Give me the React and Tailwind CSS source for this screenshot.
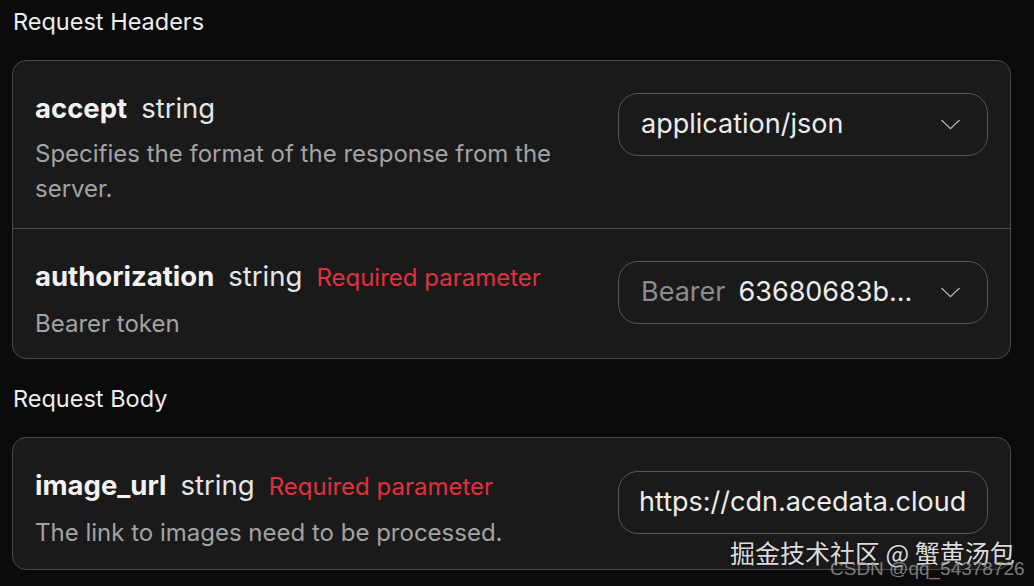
function Chevron() {
  return (
    <svg viewBox="0 0 22 12" className="h-[11px] w-[21px] shrink-0" fill="none" stroke="#bdbdbd" strokeWidth="1.5">
      <path d="M1.5 1.5l9.5 9 9.5-9" strokeLinecap="round" strokeLinejoin="round" />
    </svg>
  );
}

function Select({ children }) {
  return (
    <div className="mt-[3px] flex h-[63px] w-[370px] shrink-0 items-center justify-between rounded-[20px] border border-[#575757] pl-[22px] pr-[26px]">
      <div className="flex min-w-0 items-center gap-[13px] text-[27px] text-[#ececec]">{children}</div>
      <Chevron />
    </div>
  );
}

function Param({ name, required, desc, children, last, pb = 'pb-[17px]' }) {
  return (
    <div className={`flex items-start justify-between gap-6 px-[22px] pt-[29px] ${pb} ${last ? '' : 'border-b border-[#4a4a4a]'}`}>
      <div className="min-w-0">
        <div className="flex items-baseline gap-[14px] leading-[36px]">
          <span className="text-[27.5px] font-bold text-[#f2f2f2]">{name}</span>
          <span className="text-[27.5px] text-[#e6e6e6]">string</span>
          {required && <span className="text-[24px] text-[#e0313d]">Required parameter</span>}
        </div>
        <p className="mt-[10px] max-w-[545px] text-[24px] leading-[35px] text-[#a3a3a3]">{desc}</p>
      </div>
      {children}
    </div>
  );
}

export default function App() {
  return (
    <div className="relative min-h-[586px] w-[1034px] overflow-hidden bg-[#0b0b0b] font-['Inter',sans-serif]">
      <div className="ml-[12px] w-[999px]">
        <h2 className="pl-[1px] pt-[6px] text-[23.5px] leading-[32px] text-[#ededed]">Request Headers</h2>
        <div className="mt-[22px] overflow-hidden rounded-[14px] border border-[#4a4a4a] bg-[#1a1a1b]">
          <Param name="accept" desc="Specifies the format of the response from the server." pb="pb-[22px]">
            <Select>
              <span>application/json</span>
            </Select>
          </Param>
          <Param name="authorization" required desc="Bearer token" last>
            <Select>
              <span className="text-[#8c8c8c]">Bearer</span>
              <span className="truncate">63680683b...</span>
            </Select>
          </Param>
        </div>

        <h2 className="pl-[1px] pt-[24px] text-[23.5px] leading-[32px] text-[#ededed]">Request Body</h2>
        <div className="mt-[22px] overflow-hidden rounded-[14px] border border-[#4a4a4a] bg-[#1a1a1b]">
          <Param name="image_url" required desc="The link to images need to be processed." last pb="pb-[19px]">
            <div className="mt-[4px] flex h-[63px] w-[370px] shrink-0 items-center overflow-hidden rounded-[20px] border border-[#575757] pl-[20px] text-[27px] text-[#ececec]">
              <span className="whitespace-nowrap">https://cdn.acedata.cloud</span>
            </div>
          </Param>
        </div>
      </div>

      <div className="pointer-events-none absolute left-[730px] top-[534px] whitespace-nowrap text-[25px] text-[#dcdcdc] font-['Noto_Sans_CJK_SC',sans-serif] [text-shadow:0_0_2px_rgba(0,0,0,0.6)]">
        掘金技术社区 @ 蟹黄汤包
      </div>
      <div className="pointer-events-none absolute left-[830px] top-[555px] whitespace-nowrap text-[19px] text-[#9a9a9a]/80 font-['Liberation_Sans',sans-serif]">
        CSDN @qq_54378726
      </div>
    </div>
  );
}
